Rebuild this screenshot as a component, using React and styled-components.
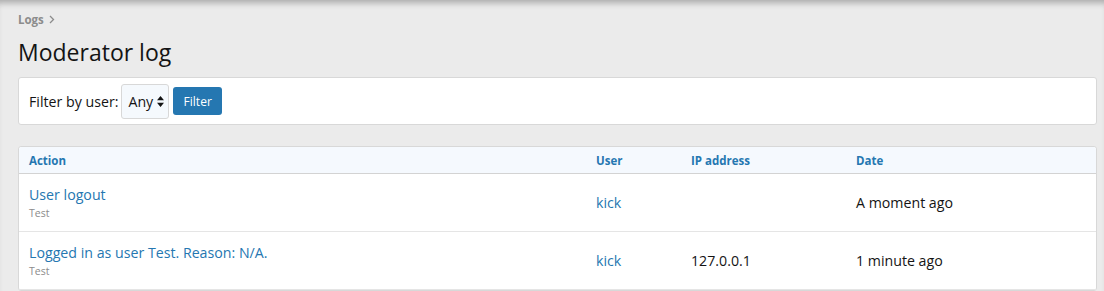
import React from "react";
import styled, { createGlobalStyle } from "styled-components";

const GlobalStyle = createGlobalStyle`
  html, body {
    margin: 0;
    padding: 0;
    background: #ebebeb;
  }
  body {
    font-family: "Segoe UI", "Open Sans", "Liberation Sans", sans-serif;
    color: #141414;
  }
`;

const Page = styled.div`
  min-height: 291px;
  padding: 10px 7px 0 18px;
  box-shadow: inset 0 7px 6px -4px rgba(0, 0, 0, 0.28);
`;

const Breadcrumb = styled.div`
  display: flex;
  align-items: center;
  gap: 5px;
  font-size: 11.5px;
  font-weight: 700;
  color: #8c8c8c;
  height: 18px;
  svg {
    margin-top: 1px;
  }
`;

const Title = styled.h1`
  margin: 7px 0 0;
  font-size: 23px;
  font-weight: 400;
  line-height: 34px;
  color: #141414;
`;

const Block = styled.div`
  background: #fff;
  border: 1px solid #d8d8d8;
  border-radius: 3px;
  margin-top: ${(p) => p.$gap || 0}px;
`;

const FilterRow = styled.form`
  display: flex;
  align-items: center;
  padding: 6px 10px;
  height: 34px;
  font-size: 14.2px;
`;

const Label = styled.span`
  margin-right: 3px;
`;

const SelectBox = styled.div`
  display: flex;
  align-items: center;
  gap: 4px;
  height: 33px;
  padding: 0 4px 0 6px;
  background: #f5f9fd;
  border: 1px solid #d8d8d8;
  border-radius: 3px;
  font-size: 14.2px;
`;

const Button = styled.button`
  margin-left: 4px;
  height: 28px;
  width: 49px;
  padding: 0;
  background: #2577b1;
  color: #fff;
  border: none;
  border-radius: 3px;
  font-family: inherit;
  font-size: 12px;
`;

const Grid = styled.div`
  display: grid;
  grid-template-columns: 567px 95px 165px 1fr;
`;

const HeadRow = styled(Grid)`
  background: #f5f9fe;
  border-bottom: 1px solid #d3d3d3;
  height: 26px;
  border-radius: 3px 3px 0 0;
`;

const HeadCell = styled.div`
  display: flex;
  align-items: center;
  padding: 0 10px;
  font-size: 11.5px;
  font-weight: 700;
  color: #2577b1;
`;

const Row = styled(Grid)`
  height: 57px;
  border-bottom: 1px solid #e5e5e5;
`;

const Cell = styled.div`
  display: flex;
  flex-direction: column;
  justify-content: center;
  padding: 0 10px;
  font-size: 14.2px;
  color: ${(p) => (p.$link ? "#2577b1" : "#141414")};
`;

const ActionTitle = styled.a`
  color: #2577b1;
  text-decoration: none;
  line-height: 20px;
`;

const Sub = styled.span`
  font-size: 10.5px;
  color: #8c8c8c;
  line-height: 16px;
`;

const rows = [
  { action: "User logout", sub: "Test", user: "kick", ip: "", date: "A moment ago" },
  {
    action: "Logged in as user Test. Reason: N/A.",
    sub: "Test",
    user: "kick",
    ip: "127.0.0.1",
    date: "1 minute ago",
  },
];

export default function App() {
  return (
    <>
      <GlobalStyle />
      <Page>
        <Breadcrumb>
          Logs
          <svg width="6" height="9" viewBox="0 0 6 9">
            <path d="M1 1l3.5 3.5L1 8" fill="none" stroke="#8c8c8c" strokeWidth="1.3" />
          </svg>
        </Breadcrumb>
        <Title>Moderator log</Title>
        <Block $gap={8}>
          <FilterRow>
            <Label>Filter by user:</Label>
            <SelectBox>
              Any
              <svg width="7" height="11" viewBox="0 0 7 11">
                <path d="M3.5 0L7 4.2H0z M3.5 11L0 6.8h7z" fill="#141414" />
              </svg>
            </SelectBox>
            <Button type="button">Filter</Button>
          </FilterRow>
        </Block>
        <Block $gap={21}>
          <HeadRow>
            <HeadCell>Action</HeadCell>
            <HeadCell>User</HeadCell>
            <HeadCell>IP address</HeadCell>
            <HeadCell>Date</HeadCell>
          </HeadRow>
          {rows.map((r, i) => (
            <Row key={i}>
              <Cell>
                <ActionTitle href="#">{r.action}</ActionTitle>
                <Sub>{r.sub}</Sub>
              </Cell>
              <Cell $link>{r.user}</Cell>
              <Cell>{r.ip}</Cell>
              <Cell>{r.date}</Cell>
            </Row>
          ))}
        </Block>
      </Page>
    </>
  );
}
